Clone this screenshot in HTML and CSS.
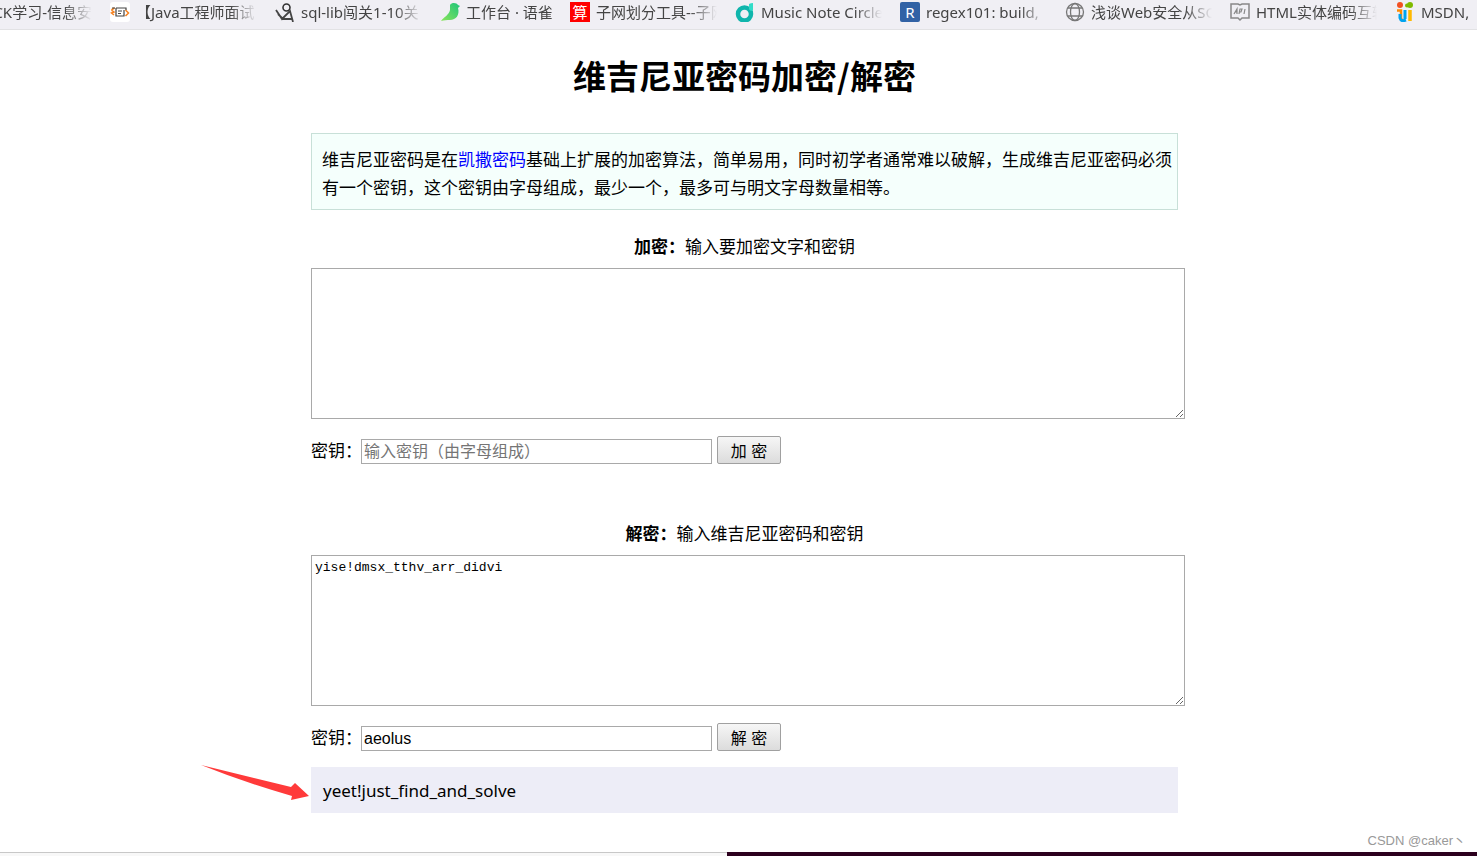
FILE: index.html
```html
<!DOCTYPE html>
<html lang="zh-CN">
<head>
<meta charset="utf-8">
<title>维吉尼亚密码加密/解密</title>
<link rel="stylesheet" href="styles.css">
</head>
<body>
<nav class="bookmarks" aria-label="书签栏">
  <a class="bookmark bookmark-cut" href="#"><span class="label">CK学习-信息安</span></a>
  <a class="bookmark" href="#">
    <svg class="icon" viewBox="0 0 20 20"><rect width="20" height="20" rx="3" fill="#fff"/><path d="M4.500 6L2 7.500v1L4 10l-2.500 1L4 13M15.500 8L18.500 11 15.500 14" fill="none" stroke="#f58220" stroke-width="1.500"/><path d="M2 6h3M6 6h10v2M6 6v8h8V8M8 9h4M8 11.500h3" fill="none" stroke="#444" stroke-width="1.200"/></svg>
    <span class="label">【Java工程师面试</span></a>
  <a class="bookmark" href="#">
    <svg class="icon" viewBox="0 0 20 20"><circle cx="11.500" cy="5.500" r="3.500" fill="none" stroke="#333" stroke-width="1.600"/><path d="M1 8l6 9 8-8 3 11M3 12l5 5h9" fill="none" stroke="#444" stroke-width="1.800"/></svg>
    <span class="label">sql-lib闯关1-10关</span></a>
  <a class="bookmark bookmark-short" href="#">
    <svg class="icon" viewBox="0 0 20 20"><defs><linearGradient id="bird" x1="0" y1="1" x2="1" y2="0"><stop offset="0" stop-color="#8be45b"/><stop offset="1" stop-color="#1dc57a"/></linearGradient></defs><path d="M10 3c2-3 7-2 8 0l2 1-2 2c2 7-2 12-8 12-3 0-6 0-9 1 3-4 8-6 9-11z" fill="url(#bird)"/></svg>
    <span class="label">工作台 · 语雀</span></a>
  <a class="bookmark" href="#">
    <span class="icon icon-red">算</span>
    <span class="label">子网划分工具--子网</span></a>
  <a class="bookmark" href="#">
    <svg class="icon" viewBox="0 0 20 20"><circle cx="9.500" cy="12" r="6.500" fill="none" stroke="#10b5ac" stroke-width="4.500"/><path d="M14 2q2-1 4-1v7c-1 2-4 0-4-1z" fill="#32dcc8"/></svg>
    <span class="label">Music Note Circle</span></a>
  <a class="bookmark" href="#">
    <span class="icon icon-blue">R</span>
    <span class="label">regex101: build,</span></a>
  <a class="bookmark" href="#">
    <svg class="icon" viewBox="0 0 20 20" fill="none" stroke="#777" stroke-width="1.300"><circle cx="10" cy="10" r="8.500"/><ellipse cx="10" cy="10" rx="4.500" ry="8.500"/><path d="M3 6h14M3 14h14"/></svg>
    <span class="label">浅谈Web安全从SQ</span></a>
  <a class="bookmark" href="#">
    <svg class="icon" viewBox="0 0 20 20"><path d="M1 2h7l2 1 2-1h7v14h-7l-2 2-2-2H1z" fill="none" stroke="#888" stroke-width="1.500"/><path d="M4 12l3-5v5M5 10h2M9 12l1-5h2l-1 3H9M14 12l1-5" fill="none" stroke="#888" stroke-width="1.200"/></svg>
    <span class="label">HTML实体编码互转</span></a>
  <a class="bookmark" href="#">
    <svg class="icon" viewBox="0 0 20 20" fill="none"><circle cx="5" cy="3" r="3" fill="#f25022"/><circle cx="12" cy="3.500" r="2" fill="#7fba00"/><circle cx="15" cy="3" r="3" fill="#7fba00"/><path d="M2 8.500h4V16q0 2 3 3" stroke="#ff8a00" stroke-width="2.500"/><path d="M5 12v4q1 4 6 2" stroke="#00a4ef" stroke-width="3"/><path d="M10 8v9" stroke="#00a4ef" stroke-width="3"/><path d="M15 8v11" stroke="#ffb900" stroke-width="3.500"/></svg>
    <span class="label">MSDN,</span></a>
</nav>

<main class="page">
  <h1 class="title">维吉尼亚密码加密/解密</h1>
  <p class="intro">维吉尼亚密码是在<a class="link" href="#">凯撒密码</a>基础上扩展的加密算法，简单易用，同时初学者通常难以破解，生成维吉尼亚密码必须有一个密钥，这个密钥由字母组成，最少一个，最多可与明文字母数量相等。</p>

  <form class="tool">
    <label class="caption" for="plain"><b>加密：</b>输入要加密文字和密钥</label>
    <textarea class="text" id="plain"></textarea>
    <div class="key-row">
      <label class="key-label" for="key1">密钥：</label>
      <input class="key" id="key1" type="text" placeholder="输入密钥（由字母组成）">
      <button class="btn" type="button">加 密</button>
    </div>
  </form>

  <form class="tool">
    <label class="caption" for="cipher"><b>解密：</b>输入维吉尼亚密码和密钥</label>
    <textarea class="text" id="cipher" spellcheck="false">yise!dmsx_tthv_arr_didvi</textarea>
    <div class="key-row">
      <label class="key-label" for="key2">密钥：</label>
      <input class="key" id="key2" type="text" value="aeolus" spellcheck="false">
      <button class="btn" type="button">解 密</button>
    </div>
  </form>

  <div class="result">
    <output>yeet!just_find_and_solve</output>
    <svg class="arrow" viewBox="0 0 108 36" width="108" height="36"><path d="M0 0L90 22 94 18 108 31 90 35 91 31Q45 18 0 0z" fill="#ff3a3a"/></svg>
  </div>
</main>

<footer class="footer">
  <span class="watermark">CSDN @caker丶</span>
  <div class="strip"><span class="strip-light"></span><span class="strip-dark"></span></div>
</footer>
</body>
</html>
```
FILE: styles.css
```css
* { box-sizing: border-box; }

body {
  margin: 0;
  min-height: 100vh;
  display: flex;
  flex-direction: column;
  background: #fff;
  color: #000;
  font-family: "Noto Sans CJK SC", sans-serif;
  font-size: 17px;
  line-height: 28px;
  overflow-x: hidden;
}

.bookmarks {
  display: flex;
  gap: 16px;
  height: 30px;
  padding-bottom: 5px;
  background: #f0eff4;
  border-bottom: 1px solid #e2e2e4;
  overflow: hidden;
  font-family: "Noto Sans", "Noto Sans CJK SC", sans-serif;
  font-size: 15px;
  line-height: 24px;
}

.bookmark {
  display: flex;
  flex: none;
  align-items: center;
  gap: 6px;
  width: 149px;
  color: #444;
  text-decoration: none;
  white-space: nowrap;
}

.bookmark-short { width: 114px; }

.bookmark-cut {
  width: 94px;
  padding-right: 2px;
  justify-content: flex-end;
  overflow: hidden;
}

.bookmark .label {
  max-width: 123px;
  overflow: hidden;
  -webkit-mask-image: linear-gradient(to right, #000 94px, transparent 121px);
  mask-image: linear-gradient(to right, #000 94px, transparent 121px);
}

.bookmark-cut .label {
  flex: none;
  -webkit-mask-image: linear-gradient(to left, transparent, #000 28px);
  mask-image: linear-gradient(to left, transparent, #000 28px);
}

.icon {
  flex: none;
  width: 20px;
  height: 20px;
  color: #fff;
  line-height: 20px;
  text-align: center;
}

.icon-red { background: #f00; }

.icon-blue {
  background: #3162a5;
  border-radius: 2px;
}

.page {
  width: 100%;
  max-width: 879px;
  margin: 0 auto;
  padding-left: 12px;
}

.title {
  margin: 21px 0 34px;
  font-size: 33px;
  line-height: 48px;
  text-align: center;
}

.intro {
  margin: 0 0 22px;
  padding: 11px 4px 8px 10px;
  background: #f5fffc;
  border: 1px solid #c8e0d8;
}

.link {
  color: #00f;
  text-decoration: none;
}

.tool {
  display: flex;
  flex-direction: column;
  margin-bottom: 55px;
}

.caption {
  margin-bottom: 8px;
  text-align: center;
}

.text {
  width: calc(100% + 7px);
  height: 151px;
  padding: 3px;
  border: 1px solid #a9a9a9;
  font-family: "Liberation Mono", monospace;
  font-size: 13px;
  line-height: 18px;
}

.key-row {
  display: flex;
  align-items: flex-end;
  margin-top: 17px;
}

.key-label { width: 50px; white-space: nowrap; }

.key {
  width: 351px;
  height: 25px;
  margin-right: 5px;
  padding: 1px 2px;
  border: 1px solid #a9a9a9;
  font-family: "Liberation Sans", "Noto Sans CJK SC", sans-serif;
  font-size: 16px;
}

.key::placeholder { color: #757575; }

.btn {
  width: 64px;
  height: 28px;
  padding: 0;
  border: 1px solid #a0a0a0;
  border-radius: 2px;
  background: linear-gradient(#f6f6f6, #dcdcdc);
  color: #000;
  font-family: "Liberation Sans", "Noto Sans CJK SC", sans-serif;
  font-size: 16px;
}

.result {
  position: relative;
  margin-top: -39px;
  padding: 10px 12px 8px;
  background: #ededf7;
  font-family: "Noto Sans", "Noto Sans CJK SC", sans-serif;
}

.arrow {
  position: absolute;
  top: -2px;
  left: -110px;
}

.footer {
  display: flex;
  flex-direction: column;
  margin-top: auto;
}

.watermark {
  align-self: flex-end;
  padding-right: 11px;
  color: #999;
  font-family: "Liberation Sans", "Noto Sans CJK SC", sans-serif;
  font-size: 13px;
  line-height: 22px;
}

.strip {
  display: flex;
  height: 4px;
}

.strip-light {
  width: 727px;
  border-top: 1px solid #c8c8c8;
  background: #f8f8f8;
}

.strip-dark {
  flex: 1;
  background: #2c001e;
}
```
